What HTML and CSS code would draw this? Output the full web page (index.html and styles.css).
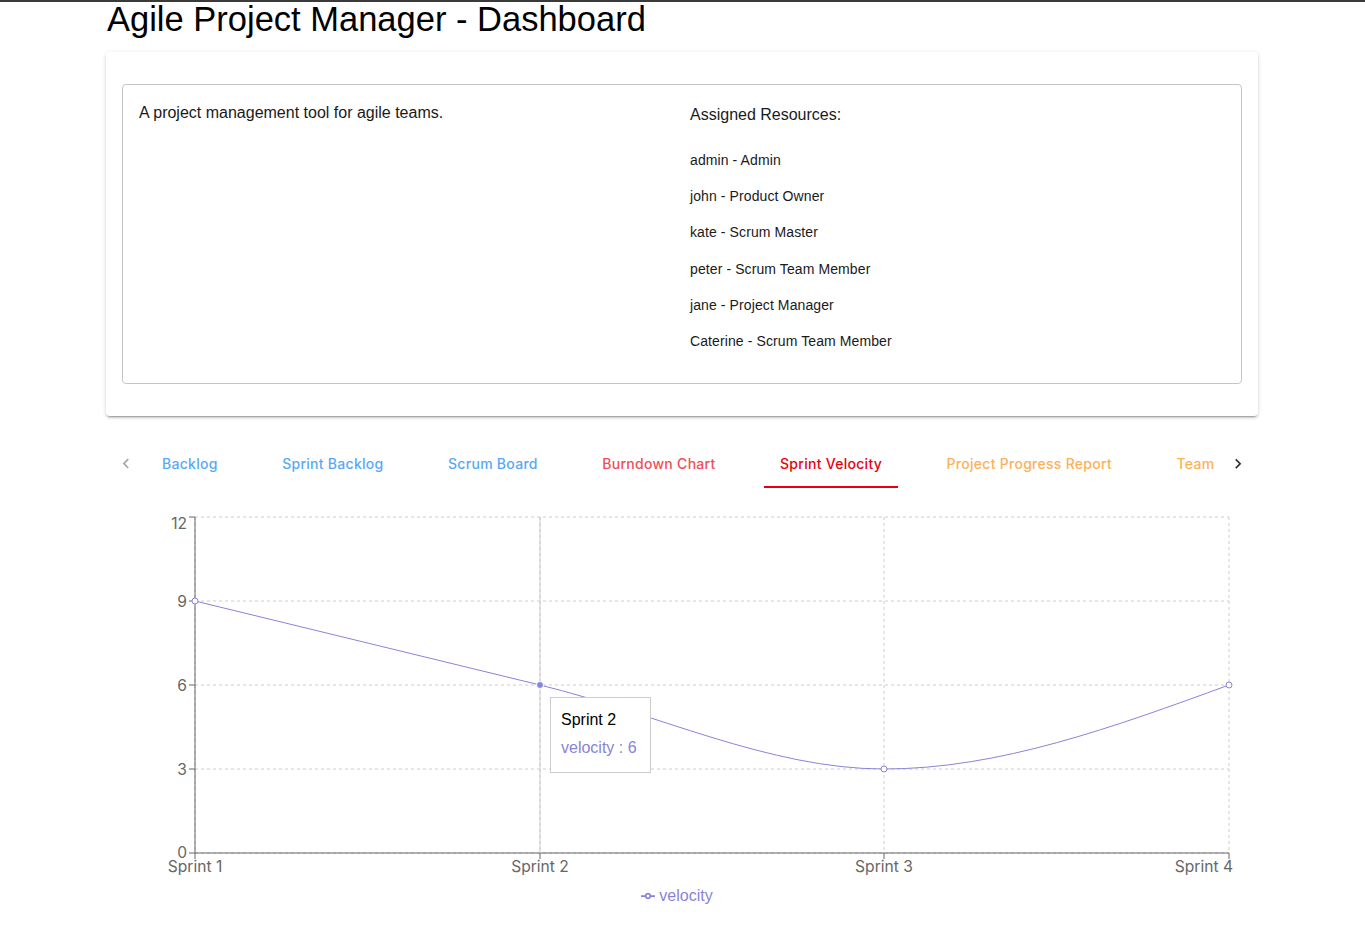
FILE: index.html
```html
<!DOCTYPE html>
<html lang="en">
<head>
<meta charset="utf-8">
<title>Agile Project Manager - Dashboard</title>
<link rel="stylesheet" href="styles.css">
</head>
<body>
<div class="page">
  <h1 class="title">Agile Project Manager - Dashboard</h1>

  <section class="card">
    <div class="info">
      <p class="desc">A project management tool for agile teams.</p>
      <div class="resources">
        <p class="res-title">Assigned Resources:</p>
        <ul class="res-list">
          <li>admin - Admin</li>
          <li>john - Product Owner</li>
          <li>kate - Scrum Master</li>
          <li>peter - Scrum Team Member</li>
          <li>jane - Project Manager</li>
          <li>Caterine - Scrum Team Member</li>
        </ul>
      </div>
    </div>
  </section>

  <nav class="tabs">
    <button class="scroll-btn is-disabled" aria-label="scroll left">
      <svg viewBox="0 0 24 24" width="20" height="20"><path d="M15.41 16.09l-4.58-4.59 4.58-4.59L14 5.5l-6 6 6 6z" fill="currentColor"/></svg>
    </button>
    <div class="tab-scroller">
      <div class="tab-list">
        <span class="tab tab-blue">Backlog</span>
        <span class="tab tab-blue">Sprint Backlog</span>
        <span class="tab tab-blue">Scrum Board</span>
        <span class="tab tab-red">Burndown Chart</span>
        <span class="tab tab-active">Sprint Velocity</span>
        <span class="tab tab-orange">Project Progress Report</span>
        <span class="tab tab-orange">Team</span>
      </div>
    </div>
    <button class="scroll-btn" aria-label="scroll right">
      <svg viewBox="0 0 24 24" width="20" height="20"><path d="M8.59 16.34l4.58-4.59-4.58-4.59L10 5.75l6 6-6 6z" fill="currentColor"/></svg>
    </button>
  </nav>

  <div class="chart">
    <svg class="chart-svg" width="1152" height="375" viewBox="0 0 1152 375">
      <g class="grid">
        <line x1="89" y1="17" x2="1123" y2="17"/>
        <line x1="89" y1="101" x2="1123" y2="101"/>
        <line x1="89" y1="185" x2="1123" y2="185"/>
        <line x1="89" y1="269" x2="1123" y2="269"/>
        <line x1="89" y1="353" x2="1123" y2="353"/>
        <line x1="89" y1="17" x2="89" y2="353"/>
        <line x1="434" y1="17" x2="434" y2="353"/>
        <line x1="778" y1="17" x2="778" y2="353"/>
        <line x1="1123" y1="17" x2="1123" y2="353"/>
      </g>
      <g class="axis">
        <line x1="89" y1="17" x2="89" y2="353"/>
        <line x1="83" y1="17" x2="89" y2="17"/>
        <line x1="83" y1="101" x2="89" y2="101"/>
        <line x1="83" y1="185" x2="89" y2="185"/>
        <line x1="83" y1="269" x2="89" y2="269"/>
        <line x1="83" y1="353" x2="89" y2="353"/>
        <line x1="89" y1="353" x2="1123" y2="353"/>
        <line x1="89" y1="353" x2="89" y2="359"/>
        <line x1="434" y1="353" x2="434" y2="359"/>
        <line x1="778" y1="353" x2="778" y2="359"/>
        <line x1="1123" y1="353" x2="1123" y2="359"/>
      </g>
      <g class="tick-labels">
        <text x="81" y="29" text-anchor="end">12</text>
        <text x="81" y="107" text-anchor="end">9</text>
        <text x="81" y="191" text-anchor="end">6</text>
        <text x="81" y="275" text-anchor="end">3</text>
        <text x="81" y="358" text-anchor="end">0</text>
        <text x="89" y="372" text-anchor="middle">Sprint 1</text>
        <text x="434" y="372" text-anchor="middle">Sprint 2</text>
        <text x="778" y="372" text-anchor="middle">Sprint 3</text>
        <text x="1127" y="372" text-anchor="end">Sprint 4</text>
      </g>
      <line class="cursor" x1="434" y1="17" x2="434" y2="353"/>
      <path class="series" d="M89,101C204,128.98 319,156.96 434,185C548.67,212.95 663.33,269 778,269C893,269 1008,226.98 1123,185"/>
      <g class="dots">
        <circle cx="89" cy="101" r="3"/>
        <circle cx="778" cy="269" r="3"/>
        <circle cx="1123" cy="185" r="3"/>
      </g>
      <circle class="active-dot" cx="434" cy="185" r="3.5"/>
    </svg>

    <div class="tooltip">
      <p class="tooltip-label">Sprint 2</p>
      <p class="tooltip-item">velocity : 6</p>
    </div>

    <div class="legend">
      <svg class="legend-icon" width="14" height="14" viewBox="0 0 32 32"><path d="M0,16h10.67A5.33,5.33,0,1,1,21.33,16H32M21.33,16A5.33,5.33,0,1,1,10.67,16" fill="none" stroke="#8884d8" stroke-width="4"/></svg>
      <span class="legend-text">velocity</span>
    </div>
  </div>
</div>
</body>
</html>
```

FILE: styles.css
```css
* { box-sizing: border-box; }

html, body {
  margin: 0;
  padding: 0;
  background: #ffffff;
}

body {
  border-top: 2px solid #3a3a3a;
  font-family: "Liberation Sans", Arial, Helvetica, sans-serif;
  color: rgba(0, 0, 0, 0.87);
}

.page {
  width: 1152px;
  margin: 0 107px 0 106px;
}

.title {
  margin: 0;
  font-size: 34.5px;
  font-weight: 400;
  line-height: 35px;
  color: #000;
  padding-left: 1px;
}

.card {
  margin-top: 15px;
  background: #fff;
  border-radius: 4px;
  box-shadow: 0 3px 1px -2px rgba(0,0,0,0.2), 0 2px 2px 0 rgba(0,0,0,0.14), 0 1px 5px 0 rgba(0,0,0,0.12);
  padding: 32px 16px 32px;
}

.info {
  border: 1px solid #c4c4c4;
  border-radius: 4px;
  padding: 16px;
  display: grid;
  grid-template-columns: 1fr 1fr;
  column-gap: 16px;
}

.desc {
  margin: 1px 0 0;
  font-size: 16px;
  line-height: 22px;
  color: #1a1a1a;
}

.resources {
  display: flex;
  flex-direction: column;
}

.res-title {
  margin: 2px 0 0;
  font-size: 16px;
  line-height: 24px;
  color: #1a1a1a;
}

.res-list {
  list-style: none;
  margin: 23px 0 16px;
  padding: 0;
  display: flex;
  flex-direction: column;
  gap: 16.2px;
}

.res-list li {
  font-size: 14px;
  line-height: 20px;
  letter-spacing: 0.1px;
  color: #1a1a1a;
}

/* Tabs */
.tabs {
  margin-top: 24px;
  height: 48px;
  display: flex;
  align-items: stretch;
}

.scroll-btn {
  width: 40px;
  flex: 0 0 40px;
  border: 0;
  background: transparent;
  padding: 0;
  display: flex;
  align-items: center;
  justify-content: center;
  color: #333;
}

.scroll-btn.is-disabled {
  color: #a6a6a6;
}

.tab-scroller {
  flex: 1 1 auto;
  overflow: hidden;
}

.tab-list {
  display: flex;
  gap: 32.5px;
  height: 48px;
  white-space: nowrap;
}

.tab {
  position: relative;
  height: 48px;
  padding: 0 16px;
  display: flex;
  align-items: center;
  font-family: Inter, "Noto Sans", sans-serif;
  font-size: 14px;
  font-weight: 500;
  letter-spacing: 0.28px;
}

.tab-blue { color: #58a9f5; }
.tab-red { color: #f04e59; }
.tab-orange { color: #fcb159; }
.tab-active { color: #e8000f; }

.tab-active::after {
  content: "";
  position: absolute;
  left: 0;
  right: 0;
  bottom: 0;
  height: 2px;
  background: #e8000f;
}

/* Chart */
.chart {
  position: relative;
  margin-top: 12px;
}

.chart-svg {
  display: block;
  overflow: visible;
}

.grid line {
  stroke: #cccccc;
  stroke-dasharray: 3 3;
  stroke-width: 1;
}

.axis line {
  stroke: #666666;
  stroke-width: 1;
}

.tick-labels text {
  font-family: Inter, "Noto Sans", sans-serif;
  font-size: 15.6px;
  fill: #666666;
}

.cursor {
  stroke: #cccccc;
  stroke-width: 1;
}

.series {
  fill: none;
  stroke: #8884d8;
  stroke-width: 1;
}

.dots circle {
  fill: #ffffff;
  stroke: #8884d8;
  stroke-width: 1;
}

.active-dot {
  fill: #8884d8;
  stroke: #ffffff;
  stroke-width: 1;
}

.tooltip {
  position: absolute;
  left: 444px;
  top: 197px;
  width: 101px;
  background: #fff;
  border: 1px solid #cccccc;
  padding: 11px 10px 9px;
  white-space: nowrap;
}

.tooltip-label {
  margin: 0;
  font-size: 16px;
  line-height: 22px;
  color: #000;
}

.tooltip-item {
  margin: 0;
  padding: 6px 0 4px;
  font-size: 16px;
  line-height: 22px;
  color: #8884d8;
}

.legend {
  display: flex;
  justify-content: center;
  align-items: center;
  padding: 9px 10px 0 0;
  height: 33px;
}

.legend-icon {
  display: block;
  margin-right: 4px;
}

.legend-text {
  font-size: 16px;
  line-height: 24px;
  color: #8884d8;
}
```
